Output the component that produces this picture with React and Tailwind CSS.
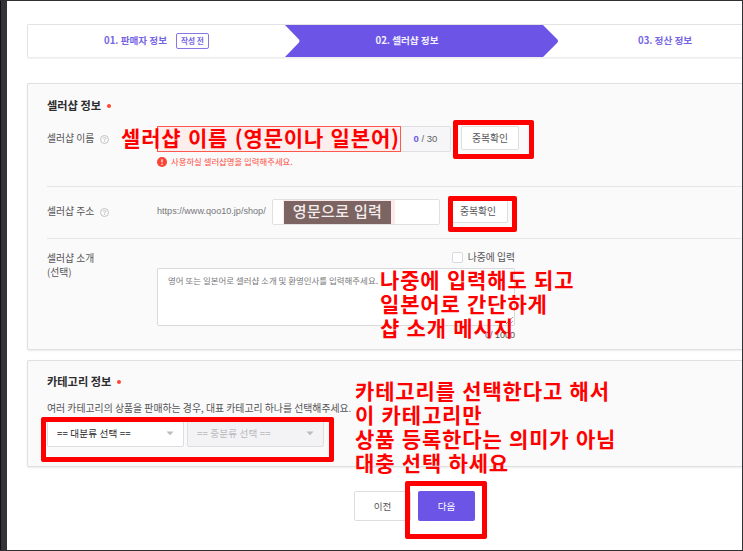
import clsx from 'clsx';

const notes = [
  ['left-[121px] top-[125px]', ['셀러샵 이름 (영문이나 일본어)']],
  ['left-[380px] top-[267px]', ['나중에 입력해도 되고', '일본어로 간단하게', '샵 소개 메시지']],
  ['left-[355px] top-[378px]', ['카테고리를 선택한다고 해서', '이 카테고리만', '상품 등록한다는 의미가 아님', '대충 선택 하세요']]
];

const marks = [
  'left-[453px] top-[120px] h-[39px] w-[81px]',
  'left-[448px] top-[196px] h-[36px] w-[69px]',
  'left-[41px] top-[417px] h-[45px] w-[293px]',
  'left-[405px] top-[481px] h-[58px] w-[82px]'
];

function Steps() {
  return (
    <ol className="flex h-[34px] items-center rounded-l-[2px] border-y border-l border-y-[#e3e3e4] border-l-[#e3e3e4] border-b-[#ededee] bg-white text-[9.6px] font-bold text-[#7565e4] shadow-[0_1px_0_#f3f3f4]">
      <li className="flex w-[257px] items-center justify-center gap-[9px]">
        <span className="pb-[2px]">01. 판매자 정보</span>
        <span className="flex h-4 w-[33px] items-center justify-center rounded-[2px] border border-[#8577e6] text-[7.7px]">작성 전</span>
      </li>
      <li className="relative grid h-8 w-[274px] place-items-center text-[#f3f1ff]">
        <svg className="absolute inset-0" width="274" height="32" viewBox="0 0 274 32">
          <path d="M0 0H258L272 14Q274 16 272 18L258 32H0L13.500 18Q15.500 16 13.500 14Z" fill="#6b54e6" />
        </svg>
        <span className="relative pr-[30px] pb-[2px]">02. 셀러샵 정보</span>
      </li>
      <li className="pb-[2px] pl-[79px]">03. 정산 정보</li>
    </ol>
  );
}

function Title({ children }) {
  return (
    <h2 className="flex h-4 items-center gap-[6px] text-[11.2px] font-bold text-[#2c2c2e]">
      <span className="pb-px">{children}</span>
      <i className="h-1 w-1 rounded-full bg-[#ff4433]" />
    </h2>
  );
}

function Label({ children }) {
  return (
    <div className="flex w-[110px] shrink-0 items-center gap-[6px] text-[9.8px] text-[#555558]">
      <span className="pb-px">{children}</span>
      <svg width="9" height="9" viewBox="0 0 9 9" fill="none" stroke="#b5b5b9" strokeWidth="0.8">
        <circle cx="4.500" cy="4.500" r="4" />
        <path d="M3.100 3.500Q3.200 2.500 4.500 2.500T5.900 3.500Q5.900 4.100 4.500 4.700V5.500M4.500 6.100V6.900" />
      </svg>
    </div>
  );
}

function CheckButton({ className }) {
  return (
    <button className={clsx('h-6 rounded-[2px] border border-[#dedee2] bg-white text-[9.8px] text-[#555558]', className)}>중복확인</button>
  );
}

function Select({ label, disabled }) {
  return (
    <button
      className={clsx(
        'flex h-[27px] w-[137px] items-center justify-between rounded-[2px] border border-[#dedee1] pr-[9px] pl-[9px] text-[9.6px] tracking-[0.15px]',
        disabled ? 'bg-[#f3f3f5] text-[#b9b9bd]' : 'bg-white text-[#29292b]'
      )}
    >
      {label}
      <svg width="8" height="5" viewBox="0 0 8 5"><path d="M0.500 0.500H7.500L4 4.300Z" fill="#bcbcc0" /></svg>
    </button>
  );
}

function ShopPanel() {
  return (
    <section className="mt-[25px] h-[267px] rounded-l-[2px] border-y border-l border-[#e0e0e1] bg-[#fafafa] pt-[14px] pl-[19px] shadow-[0_1px_2px_#ececed]">
      <Title>셀러샵 정보</Title>
      <div className="mt-[12px] flex h-[61px] items-start border-b border-[#e6e6e7]">
        <div className="flex h-[26px] items-center"><Label>셀러샵 이름</Label></div>
        <div>
          <div className="flex h-[26px]">
            <div className="w-[244px] border border-[#ff594d] bg-[#fceeed]" />
            <div className="flex w-[50px] items-center justify-center rounded-r-[2px] border border-l-0 border-[#dfdfe2] bg-[#f6f6f8] pt-px font-['Liberation_Sans',sans-serif] text-[9.5px] whitespace-pre text-[#5e5e62]">
              <b className="text-[#6b54e6]">0</b> / 30
            </div>
          </div>
          <p className="mt-[2px] flex h-[14px] items-center gap-1 text-[8.4px] text-[#ff4b3e]">
            <svg className="mt-px" width="10" height="10" viewBox="0 0 10 10">
              <circle cx="5" cy="5" r="5" fill="#fb4434" />
              <path d="M5 2.200V5.600M5 6.700V7.900" stroke="#fff" strokeWidth="1.200" />
            </svg>
            사용하실 셀러샵명을 입력해주세요.
          </p>
        </div>
        <CheckButton className="ml-[10px] w-[58px]" />
      </div>
      <div className="flex h-[52px] items-start border-b border-[#e6e6e7] pt-[12px]">
        <div className="flex h-[26px] items-center">
          <Label>셀러샵 주소</Label>
          <span className="w-[115px] font-['Liberation_Sans',sans-serif] text-[9.1px] text-[#77777b]">https://www.qoo10.jp/shop/</span>
          <div className="flex h-[26px] w-[168px] rounded-[2px] border border-[#e0e0e3] bg-white pl-[10px]">
            <div className="flex h-6 items-center bg-[#fde9e9] pr-1 pl-px">
              <span className="flex h-[23px] w-[107px] items-center justify-center bg-[#7c6463] pb-[2px] text-[15px] font-medium tracking-[0.3px] text-[#f4eeee] [word-spacing:1px]">영문으로 입력</span>
            </div>
          </div>
        </div>
        <CheckButton className="ml-[10px] w-[58px] pr-[2px]" />
      </div>
      <div className="flex pt-[12px] text-[9.8px] text-[#555558]">
        <div className="w-[110px] pt-px leading-[13.500px]">셀러샵 소개<br />(선택)</div>
        <div className="w-[358px]">
          <div className="flex h-[13px] items-center justify-end gap-[5px]">
            <i className="h-[11px] w-[11px] rounded-[2px] border border-[#d9d9df] bg-white" />
            <span className="pb-px">나중에 입력</span>
          </div>
          <div className="relative mt-[4px] h-[58px] rounded-[2px] border border-[#d9d9dc] bg-white pt-[6px] pl-[10px] text-[8.460px] leading-[11px] text-[#77777b]">
            영어 또는 일본어로 셀러샵 소개 및 환영인사를 입력해주세요.
            <svg className="absolute right-[1px] bottom-[1px]" width="7" height="7" stroke="#88888c" strokeWidth="0.8"><path d="M0 7L7 0M4 7L7 4" /></svg>
          </div>
          <p className="mt-[3px] text-right font-['Liberation_Sans',sans-serif] text-[9px] leading-[13px]"><span className="text-[#6b54e6]">0</span>/ 1000</p>
        </div>
      </div>
    </section>
  );
}

function CategoryPanel() {
  return (
    <section className="mt-[10px] h-[107px] rounded-l-[2px] border-y border-l border-[#e0e0e1] bg-[#fafafa] pt-[13px] pl-[19px] shadow-[0_1px_2px_#ececed]">
      <Title>카테고리 정보</Title>
      <p className="mt-[10px] h-4 text-[9.870px] leading-4 text-[#555558]">여러 카테고리의 상품을 판매하는 경우, 대표 카테고리 하나를 선택해주세요.</p>
      <div className="mt-1 flex gap-[3px]">
        <Select label="== 대분류 선택 ==" />
        <Select label="== 중분류 선택 ==" disabled />
      </div>
    </section>
  );
}

export default function App() {
  return (
    <div className="relative flex h-[551px] w-[743px] overflow-hidden border-y border-r border-[#303033] bg-white font-['Noto_Sans_CJK_KR',sans-serif] whitespace-nowrap">
      <aside className="w-[7px] shrink-0 border-l border-[#111] bg-[#343438]" />
      <main className="min-w-0 flex-1 pt-[23px] pl-[20px]">
        <Steps />
        <ShopPanel />
        <CategoryPanel />
        <div className="mt-[24px] ml-[327px] flex gap-[7px] text-[9.600px]">
          <button className="h-[30px] w-[57px] rounded-[2px] border border-[#dedee2] bg-white text-[#555558]">이전</button>
          <button className="h-[30px] w-[57px] rounded-[2px] bg-[#6b54e6] text-white">다음</button>
        </div>
      </main>
      {marks.map((place) => (
        <div key={place} className={clsx('absolute -mt-px rounded-[2px] border-[5px] border-[#ff0000]', place)} />
      ))}
      {notes.map(([place, lines]) => (
        <div key={place} className={clsx('absolute -mt-px text-[21px] leading-6 font-bold tracking-[0.85px] text-[#ff0000] [word-spacing:0.8px]', place)}>
          {lines.map((line) => <p key={line}>{line}</p>)}
        </div>
      ))}
    </div>
  );
}
